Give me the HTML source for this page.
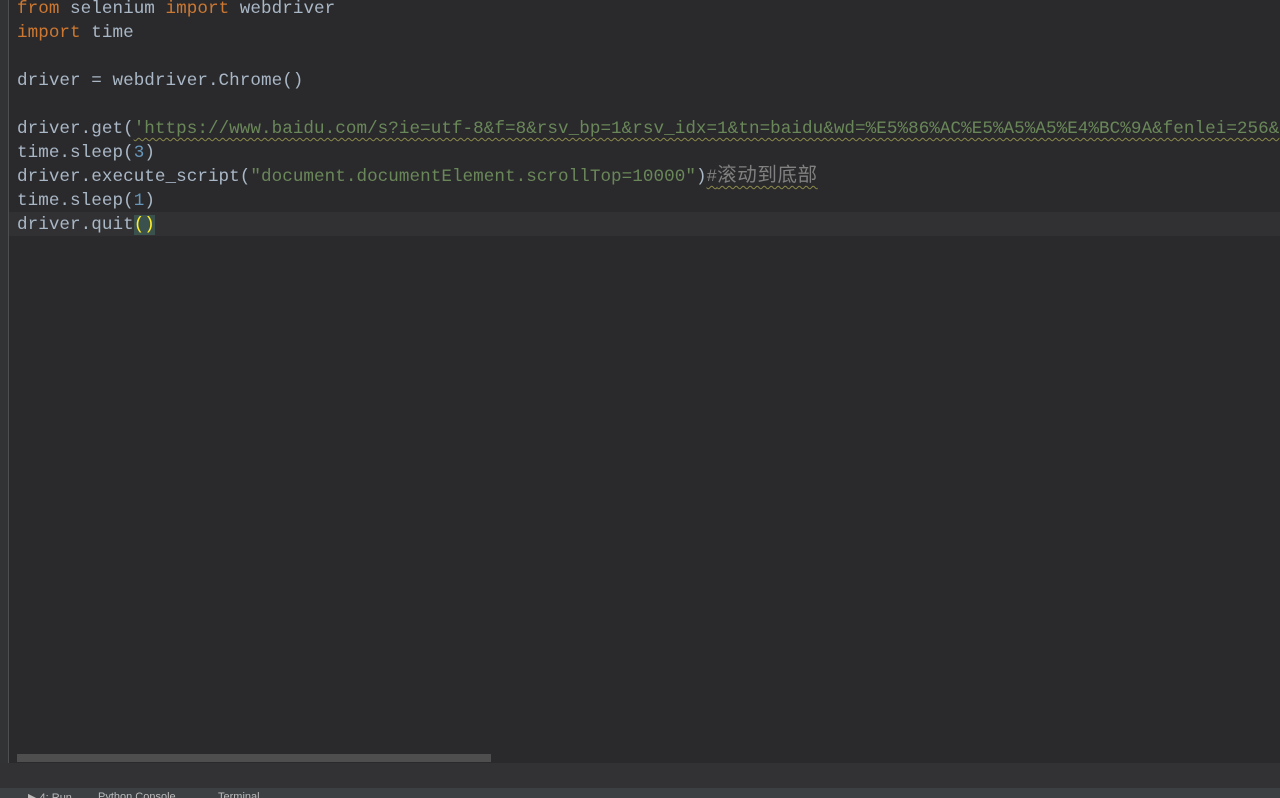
<!DOCTYPE html>
<html><head><meta charset="utf-8"><style>
html,body{margin:0;padding:0;width:1280px;height:798px;overflow:hidden;background:#2a2a2c}
.gut{position:absolute;left:0;top:0;width:8px;height:763px;background:#313335;border-right:1px solid #4d4f50}
.cur{position:absolute;left:9px;top:212px;width:1271px;height:24px;background:#313133}
.code{position:absolute;left:17px;top:-3px;font-family:"Liberation Mono","Noto Sans CJK SC",monospace;font-size:17.6px;letter-spacing:0.05px;line-height:24px;color:#a9b7c6;white-space:pre}
.ln{height:24px;overflow:visible}
.k{color:#cc7832}.s{color:#6a8759}.n{color:#6897bb}.c{color:#808080}
.cj{font-size:19.5px;letter-spacing:0.6px;line-height:0}
.w{text-decoration:underline wavy #8c8a4a;text-underline-offset:4px;text-decoration-thickness:1px}
.b{color:#ffef28;background:#3b514d}
.sb{position:absolute;left:17px;top:754px;width:474px;height:8px;background:#4e4e4e}
.panel{position:absolute;left:0;top:763px;width:1280px;height:25px;background:#323235}
.bar{position:absolute;left:0;top:788px;width:1280px;height:10px;overflow:hidden;background:#3c4043;color:#bbb;font:11px "Liberation Sans",sans-serif}
</style></head><body>
<div class="gut"></div>
<div class="cur"></div>
<div class="code"><div class="ln"><span class="k">from</span> selenium <span class="k">import</span> webdriver</div><div class="ln"><span class="k">import</span> time</div><div class="ln"> </div><div class="ln">driver = webdriver.Chrome()</div><div class="ln"> </div><div class="ln">driver.get(<span class="s w">'https://www.baidu.com/s?ie=utf-8&amp;f=8&amp;rsv_bp=1&amp;rsv_idx=1&amp;tn=baidu&amp;wd=%E5%86%AC%E5%A5%A5%E4%BC%9A&amp;fenlei=256&amp;</span></div><div class="ln">time.sleep(<span class="n">3</span>)</div><div class="ln">driver.execute_script(<span class="s">"document.documentElement.scrollTop=10000"</span>)<span class="c w">#<span class="cj">滚动到底部</span></span></div><div class="ln">time.sleep(<span class="n">1</span>)</div><div class="ln">driver.quit<span class="b">()</span></div></div>
<div class="sb"></div>
<div class="panel"></div>
<div class="bar"><span style="position:absolute;left:28px;top:3px">▶ 4: Run</span><span style="position:absolute;left:98px;top:3px">Python Console</span><span style="position:absolute;left:218px;top:3px">Terminal</span></div>
</body></html>
